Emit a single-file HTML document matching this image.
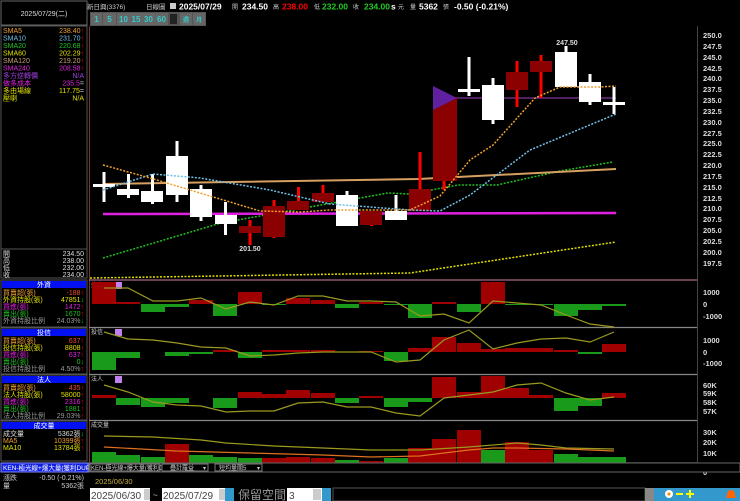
<!DOCTYPE html>
<html><head><meta charset="utf-8"><style>
html,body{margin:0;padding:0;background:#000;width:740px;height:501px;overflow:hidden}
svg{display:block}
text{font-family:"Liberation Sans","Noto Sans CJK TC",sans-serif}
</style></head><body>
<svg width="740" height="501" viewBox="0 0 740 501" xmlns="http://www.w3.org/2000/svg">
<rect width="740" height="501" fill="#000"/>
<!-- left panel -->
<g font-size="7">
<rect x="1" y="1" width="86" height="24" fill="none" stroke="#666"/>
<text x="44" y="16" fill="#ddd" text-anchor="middle">2025/07/29(二)</text>
<rect x="1" y="26" width="86" height="223" fill="none" stroke="#555"/>
<text x="3" y="33" fill="#f0a030">SMA5</text><text x="84" y="33" fill="#f0a030" text-anchor="end">238.40<tspan fill="#f00">↑</tspan></text>
<text x="3" y="40.5" fill="#70c0e8">SMA10</text><text x="84" y="40.5" fill="#70c0e8" text-anchor="end">231.70<tspan fill="#f00">↑</tspan></text>
<text x="3" y="48" fill="#20c020">SMA20</text><text x="84" y="48" fill="#20c020" text-anchor="end">220.68<tspan fill="#f00">↑</tspan></text>
<text x="3" y="55.5" fill="#e0e000">SMA60</text><text x="84" y="55.5" fill="#e0e000" text-anchor="end">202.29<tspan fill="#f00">↑</tspan></text>
<text x="3" y="63" fill="#c8a070">SMA120</text><text x="84" y="63" fill="#c8a070" text-anchor="end">219.20<tspan fill="#f00">↑</tspan></text>
<text x="3" y="70.5" fill="#e020e0">SMA240</text><text x="84" y="70.5" fill="#e020e0" text-anchor="end">208.58<tspan fill="#f00">↑</tspan></text>
<text x="3" y="78" fill="#a040e0">多方逆轉價</text><text x="84" y="78" fill="#a040e0" text-anchor="end">N/A</text>
<text x="3" y="85.5" fill="#e020e0">做多成本</text><text x="84" y="85.5" fill="#e020e0" text-anchor="end">235.5<tspan fill="#ccc">=</tspan></text>
<text x="3" y="93" fill="#e0e000">多由場線</text><text x="84" y="93" fill="#e0e000" text-anchor="end">117.75<tspan fill="#ccc">=</tspan></text>
<text x="3" y="100.5" fill="#e0e000">壓喇</text><text x="84" y="100.5" fill="#e0e000" text-anchor="end">N/A</text>
<rect x="1" y="249" width="86" height="29" fill="none" stroke="#555"/>
<g fill="#ddd"><text x="3" y="256">開</text><text x="84" y="256" text-anchor="end">234.50</text>
<text x="3" y="263">高</text><text x="84" y="263" text-anchor="end">238.00</text>
<text x="3" y="270">低</text><text x="84" y="270" text-anchor="end">232.00</text>
<text x="3" y="277">收</text><text x="84" y="277" text-anchor="end">234.00</text></g>
<!-- foreign -->
<rect x="1" y="280" width="86" height="47" fill="none" stroke="#555"/>
<rect x="2" y="281" width="84" height="7" fill="#0010f0"/><text x="44" y="287" fill="#fff" text-anchor="middle">外資</text>
<text x="3" y="295" fill="#f0a030">買賣超(張)</text><text x="84" y="295" fill="#f05030" text-anchor="end">-188<tspan fill="#f00">↑</tspan></text>
<text x="3" y="302" fill="#e0e000">外資持股(張)</text><text x="84" y="302" fill="#e0e000" text-anchor="end">47851<tspan fill="#0c0">↓</tspan></text>
<text x="3" y="309" fill="#e020e0">買進(張)</text><text x="84" y="309" fill="#e020e0" text-anchor="end">1472<tspan fill="#f00">↑</tspan></text>
<text x="3" y="316" fill="#20c020">賣出(張)</text><text x="84" y="316" fill="#20c020" text-anchor="end">1670<tspan fill="#f00">↑</tspan></text>
<text x="3" y="323" fill="#999">外資持股比例</text><text x="84" y="323" fill="#999" text-anchor="end">24.03%<tspan fill="#0c0">↓</tspan></text>
<!-- trust -->
<rect x="1" y="328" width="86" height="46" fill="none" stroke="#555"/>
<rect x="2" y="329" width="84" height="7" fill="#0010f0"/><text x="44" y="335" fill="#fff" text-anchor="middle">投信</text>
<text x="3" y="343" fill="#f0a030">買賣超(張)</text><text x="84" y="343" fill="#f05030" text-anchor="end">637<tspan fill="#f00">↑</tspan></text>
<text x="3" y="350" fill="#e0e000">投信持股(張)</text><text x="84" y="350" fill="#e0e000" text-anchor="end">8808<tspan fill="#f00">↑</tspan></text>
<text x="3" y="357" fill="#e020e0">買進(張)</text><text x="84" y="357" fill="#e020e0" text-anchor="end">637<tspan fill="#f00">↑</tspan></text>
<text x="3" y="364" fill="#20c020">賣出(張)</text><text x="84" y="364" fill="#20c020" text-anchor="end">0<tspan fill="#0c0">↓</tspan></text>
<text x="3" y="371" fill="#999">投信持股比例</text><text x="84" y="371" fill="#999" text-anchor="end">4.50%<tspan fill="#f00">↑</tspan></text>
<!-- legal -->
<rect x="1" y="375" width="86" height="45" fill="none" stroke="#555"/>
<rect x="2" y="376" width="84" height="7" fill="#0010f0"/><text x="44" y="382" fill="#fff" text-anchor="middle">法人</text>
<text x="3" y="390" fill="#f0a030">買賣超(張)</text><text x="84" y="390" fill="#f05030" text-anchor="end">435<tspan fill="#f00">↑</tspan></text>
<text x="3" y="397" fill="#e0e000">法人持股(張)</text><text x="84" y="397" fill="#e0e000" text-anchor="end">58000<tspan fill="#f00">↑</tspan></text>
<text x="3" y="404" fill="#e020e0">買進(張)</text><text x="84" y="404" fill="#e020e0" text-anchor="end">2316<tspan fill="#f00">↑</tspan></text>
<text x="3" y="411" fill="#20c020">賣出(張)</text><text x="84" y="411" fill="#20c020" text-anchor="end">1881<tspan fill="#f00">↑</tspan></text>
<text x="3" y="418" fill="#999">法人持股比例</text><text x="84" y="418" fill="#999" text-anchor="end">29.03%<tspan fill="#f00">↑</tspan></text>
<!-- volume -->
<rect x="1" y="421" width="86" height="40" fill="none" stroke="#555"/>
<rect x="2" y="422" width="84" height="7" fill="#0010f0"/><text x="44" y="428" fill="#fff" text-anchor="middle">成交量</text>
<text x="3" y="436" fill="#ddd">成交量</text><text x="84" y="436" fill="#ddd" text-anchor="end">5362張<tspan fill="#0c0">↓</tspan></text>
<text x="3" y="443" fill="#f0a030">MA5</text><text x="84" y="443" fill="#f0a030" text-anchor="end">10399張<tspan fill="#f00">↑</tspan></text>
<text x="3" y="450" fill="#e0e000">MA10</text><text x="84" y="450" fill="#e0e000" text-anchor="end">13784張<tspan fill="#f00">↑</tspan></text>
<rect x="1" y="463" width="87" height="9" fill="#1020e0" stroke="#88f"/>
<text x="3" y="470" fill="#fff" font-size="6.5">KEN-極光線+爆大量(獲利DUP)</text>
<text x="3" y="480" fill="#ccc">漲跌</text><text x="84" y="480" fill="#ccc" text-anchor="end">-0.50 (-0.21%)</text>
<text x="3" y="488" fill="#ccc">量</text><text x="84" y="488" fill="#ccc" text-anchor="end">5362張</text>
</g>
<!-- header -->
<g font-size="7.5">
<text x="87" y="9" fill="#ccc" font-size="6.5">新日興(3376)</text>
<text x="146" y="9" fill="#ccc" font-size="6.5">日線圖</text>
<rect x="170" y="3" width="6" height="6" fill="#ccc"/>
<g font-weight="bold" font-size="8.5">
<text x="179" y="9.5" fill="#fff">2025/07/29</text>
<text x="232" y="9" fill="#ccc" font-size="6" font-weight="normal">開</text><text x="242" y="9.5" fill="#fff">234.50</text>
<text x="273" y="9" fill="#ccc" font-size="6" font-weight="normal">高</text><text x="282" y="9.5" fill="#f00">238.00</text>
<text x="314" y="9" fill="#ccc" font-size="6" font-weight="normal">低</text><text x="322" y="9.5" fill="#2c2">232.00</text>
<text x="353" y="9" fill="#ccc" font-size="6" font-weight="normal">收</text><text x="364" y="9.5" fill="#2c2">234.00</text>
<text x="391" y="9.5" fill="#fff">s</text><text x="398" y="9" fill="#ccc" font-size="6" font-weight="normal">元</text>
<text x="410" y="9" fill="#ccc" font-size="6" font-weight="normal">量</text><text x="419" y="9.5" fill="#fff">5362</text>
<text x="443" y="9" fill="#ccc" font-size="6" font-weight="normal">張</text>
<text x="454" y="9.5" fill="#fff">-0.50 (-0.21%)</text>
</g></g>
<!-- toolbar -->
<rect x="90" y="12" width="116" height="14" fill="#555"/>
<g fill="#3cc" font-size="8" text-anchor="middle" font-weight="bold">
<rect x="91" y="13" width="11" height="12" fill="#666"/><text x="96.5" y="22">1</text>
<rect x="103" y="13" width="13" height="12" fill="#666"/><text x="109.5" y="22">5</text>
<rect x="117" y="13" width="13" height="12" fill="#666"/><text x="123.5" y="22">10</text>
<rect x="130" y="13" width="12" height="12" fill="#666"/><text x="136" y="22">15</text>
<rect x="142" y="13" width="13" height="12" fill="#666"/><text x="148.5" y="22">30</text>
<rect x="155" y="13" width="13" height="12" fill="#666"/><text x="161.5" y="22">60</text>
<rect x="170" y="14" width="7" height="10" fill="#222"/>
<rect x="180" y="13" width="12" height="12" fill="#666"/><text x="186" y="22" font-size="6">週</text>
<rect x="193" y="13" width="12" height="12" fill="#666"/><text x="199" y="22" font-size="6">月</text>
</g>
<!-- chart frame -->
<line x1="89.5" y1="26" x2="89.5" y2="472" stroke="#733" />
<line x1="697.5" y1="26" x2="697.5" y2="472" stroke="#444"/>
<g stroke="#888" stroke-width="1.2">
<line x1="89" y1="280" x2="697" y2="280" stroke="#a68"/>
<line x1="89" y1="327.5" x2="697" y2="327.5"/>
<line x1="89" y1="374.5" x2="697" y2="374.5"/>
<line x1="89" y1="420.5" x2="697" y2="420.5"/>
<line x1="89" y1="463" x2="697" y2="463"/>
</g>
<!-- right axis -->
<g fill="#ddd" font-size="7.5" font-weight="bold">
<text x="703" y="38">250.0</text><text x="703" y="49">247.5</text><text x="703" y="60">245.0</text><text x="703" y="71">242.5</text><text x="703" y="81">240.0</text><text x="703" y="92">237.5</text><text x="703" y="103">235.0</text><text x="703" y="114">232.5</text><text x="703" y="125">230.0</text><text x="703" y="136">227.5</text><text x="703" y="146">225.0</text><text x="703" y="157">222.5</text><text x="703" y="168">220.0</text><text x="703" y="179">217.5</text><text x="703" y="190">215.0</text><text x="703" y="201">212.5</text><text x="703" y="211">210.0</text><text x="703" y="222">207.5</text><text x="703" y="233">205.0</text><text x="703" y="244">202.5</text><text x="703" y="255">200.0</text><text x="703" y="266">197.5</text>
<text x="703" y="295">1000</text><text x="703" y="307">0</text><text x="703" y="319">-1000</text>
<text x="703" y="343">1000</text><text x="703" y="355">0</text><text x="703" y="366">-1000</text>
<text x="703" y="388">60K</text><text x="703" y="396">59K</text><text x="703" y="405">58K</text><text x="703" y="414">57K</text>
<text x="703" y="435">30K</text><text x="703" y="445">20K</text><text x="703" y="456">10K</text>
<text x="703" y="475">0</text>
</g>
<!-- MA lines -->
<polyline points="90,278 410,273 616,242" fill="none" stroke="#e0e000" stroke-width="1.5" stroke-dasharray="2 1.5"/>
<polyline points="103,258 221,223 388,193 410,194 458,185 497,185 560,171 613,162" fill="none" stroke="#20c020" stroke-width="1.5" stroke-dasharray="2 1.5"/>
<polyline points="103,184 418,179 616,169" fill="none" stroke="#d8a060" stroke-width="2"/>
<polyline points="103,214 616,213" fill="none" stroke="#e020e0" stroke-width="2.5"/>
<line x1="457" y1="98" x2="616" y2="98" stroke="#a040c0" stroke-width="1"/>
<!-- candles -->
<g>
<g fill="#fff">
<rect x="102.5" y="172" width="3" height="30"/><rect x="93" y="184" width="22" height="3"/>
<rect x="127" y="174" width="3" height="24"/><rect x="117" y="189" width="22" height="6"/>
<rect x="151" y="174" width="3" height="30"/><rect x="141" y="191" width="22" height="11"/>
<rect x="175.5" y="141" width="3" height="61"/><rect x="166" y="156" width="22" height="39"/>
<rect x="199.5" y="185" width="3" height="36"/><rect x="190" y="189" width="22" height="28"/>
<rect x="224" y="202" width="3" height="33"/><rect x="215" y="215" width="22" height="9"/>
<rect x="345.5" y="191" width="3" height="35"/><rect x="336" y="195" width="22" height="31"/>
<rect x="394.5" y="195" width="3" height="25"/><rect x="385" y="211" width="22" height="9"/>
<rect x="467.5" y="57" width="3" height="39"/><rect x="458" y="89" width="22" height="3"/>
<rect x="491.5" y="78" width="3" height="46"/><rect x="482" y="85" width="22" height="35"/>
<rect x="564.5" y="46" width="3" height="41"/><rect x="555" y="52" width="22" height="35"/>
<rect x="588.5" y="74" width="3" height="31"/><rect x="579" y="82" width="22" height="20"/>
<rect x="612.5" y="87" width="3" height="27"/><rect x="603" y="102" width="22" height="3"/>
</g>
<g fill="#f00">
<rect x="248.5" y="220" width="3" height="25"/><rect x="272.5" y="200" width="3" height="38"/><rect x="297" y="187" width="3" height="23"/><rect x="321.5" y="185" width="3" height="17"/><rect x="370" y="211" width="3" height="15"/><rect x="418.5" y="152" width="3" height="59"/><rect x="442.5" y="97" width="3" height="93"/><rect x="515.5" y="61" width="3" height="46"/><rect x="539.5" y="55" width="3" height="43"/>
</g>
<g fill="#8b0000">
<rect x="239" y="226" width="22" height="7"/><rect x="263" y="206" width="22" height="31"/><rect x="287" y="201" width="22" height="9"/><rect x="312" y="193" width="22" height="9"/><rect x="360" y="211" width="22" height="14"/><rect x="409" y="189" width="22" height="22"/><rect x="433" y="97" width="24" height="84"/><rect x="506" y="72" width="22" height="18"/><rect x="530" y="61" width="22" height="11"/>
</g>
<polygon points="433,86 457,98 433,110" fill="#6020a0"/>
<text x="250" y="251" fill="#ddd" font-size="7" font-weight="bold" text-anchor="middle">201.50</text>
<text x="567" y="45" fill="#ddd" font-size="7" font-weight="bold" text-anchor="middle">247.50</text>
</g>
<polyline points="103,190 153,174 200,178 270,190 330,204 410,210 440,211 470,195 530,150 616,114" fill="none" stroke="#70c0e8" stroke-width="1.5" stroke-dasharray="2 1.5"/>
<polyline points="103,165 150,178 200,193 260,211 300,212 330,210 410,210 440,196 470,160 493,145 535,98 560,87 600,87 616,86" fill="none" stroke="#f0a030" stroke-width="1.5" stroke-dasharray="2 1.5"/>
<!-- subpanel labels -->
<g font-size="6" fill="#ccc"><text x="91" y="287">外資</text><text x="91" y="334">投信</text><text x="91" y="381">法人</text><text x="91" y="427">成交量</text></g>
<g fill="#c080f0"><rect x="115" y="282" width="7" height="7"/><rect x="115" y="329" width="7" height="7"/><rect x="115" y="376" width="7" height="7"/></g>
<!-- foreign bars -->
<g fill="#a00000">
<rect x="92" y="282" width="24" height="22"/><rect x="116" y="302" width="24" height="2"/><rect x="189" y="300" width="24" height="4"/><rect x="238" y="292" width="24" height="12"/><rect x="286" y="298" width="24" height="6"/><rect x="311" y="300" width="24" height="4"/><rect x="359" y="302" width="24" height="2"/><rect x="432" y="302" width="24" height="2"/><rect x="481" y="282" width="24" height="22"/>
</g>
<g fill="#1a9a1a">
<rect x="141" y="304" width="24" height="8"/><rect x="165" y="304" width="24" height="3"/><rect x="213" y="304" width="24" height="12"/><rect x="262" y="304" width="24" height="1"/><rect x="335" y="304" width="24" height="4"/><rect x="384" y="304" width="24" height="1"/><rect x="408" y="304" width="24" height="14"/><rect x="457" y="304" width="24" height="8"/><rect x="505" y="304" width="24" height="1"/><rect x="529" y="304" width="24" height="1"/><rect x="554" y="304" width="24" height="12"/><rect x="578" y="304" width="24" height="6"/><rect x="602" y="304" width="24" height="2"/>
</g>
<polyline points="104,288 128,288 153,301 177,301 201,298 226,309 250,302 274,305 298,296 323,296 347,301 371,301 396,302 420,316 444,314 469,323 493,301 517,303 541,305 566,315 590,324 614,327" fill="none" stroke="#9a9a20" stroke-width="1.2"/>
<!-- trust bars -->
<g fill="#a00000">
<rect x="213" y="350" width="24" height="2"/><rect x="262" y="350" width="24" height="2"/><rect x="286" y="350" width="24" height="2"/><rect x="311" y="350" width="24" height="2"/><rect x="359" y="351" width="24" height="1"/><rect x="408" y="348" width="24" height="4"/><rect x="432" y="337" width="24" height="15"/><rect x="457" y="343" width="24" height="9"/><rect x="481" y="349" width="24" height="3"/><rect x="505" y="348" width="24" height="4"/><rect x="529" y="348" width="24" height="4"/><rect x="554" y="350" width="24" height="2"/><rect x="602" y="344" width="24" height="8"/>
</g>
<g fill="#1a9a1a">
<rect x="92" y="352" width="24" height="18"/><rect x="116" y="352" width="24" height="6"/><rect x="165" y="352" width="24" height="4"/><rect x="189" y="352" width="24" height="2"/><rect x="238" y="352" width="24" height="6"/><rect x="384" y="352" width="24" height="9"/><rect x="578" y="352" width="24" height="2"/>
</g>
<polyline points="104,332 128,339 153,340 177,343 201,347 226,348 250,356 274,355 298,353 323,352 347,352 371,352 396,362 420,360 444,340 469,330 493,349 517,343 541,339 566,338 590,342 614,332" fill="none" stroke="#9a9a20" stroke-width="1.2"/>
<!-- dealer bars -->
<g fill="#a00000">
<rect x="92" y="395" width="24" height="3"/><rect x="238" y="392" width="24" height="6"/><rect x="262" y="394" width="24" height="4"/><rect x="286" y="390" width="24" height="8"/><rect x="311" y="393" width="24" height="5"/><rect x="359" y="396" width="24" height="2"/><rect x="432" y="377" width="24" height="21"/><rect x="457" y="392" width="24" height="6"/><rect x="481" y="376" width="24" height="22"/><rect x="505" y="388" width="24" height="10"/><rect x="529" y="395" width="24" height="3"/><rect x="602" y="393" width="24" height="5"/>
</g>
<g fill="#1a9a1a">
<rect x="116" y="398" width="24" height="7"/><rect x="141" y="398" width="24" height="9"/><rect x="165" y="398" width="24" height="5"/><rect x="213" y="398" width="24" height="10"/><rect x="335" y="398" width="24" height="5"/><rect x="384" y="398" width="24" height="9"/><rect x="408" y="398" width="24" height="4"/><rect x="554" y="398" width="24" height="13"/><rect x="578" y="398" width="24" height="8"/>
</g>
<polyline points="104,385 128,392 153,402 177,405 201,406 226,412 250,411 274,411 298,403 323,402 347,407 371,407 396,413 420,416 444,398 469,395 493,392 517,385 541,383 566,393 590,400 614,397" fill="none" stroke="#9a9a20" stroke-width="1.2"/>
<!-- volume bars -->
<g fill="#a00000">
<rect x="165" y="444" width="24" height="19"/><rect x="262" y="458" width="24" height="5"/><rect x="286" y="457" width="24" height="6"/><rect x="311" y="458" width="24" height="5"/><rect x="359" y="461" width="24" height="2"/><rect x="408" y="448" width="24" height="15"/><rect x="432" y="439" width="24" height="24"/><rect x="457" y="430" width="24" height="33"/><rect x="505" y="442" width="24" height="21"/><rect x="529" y="450" width="24" height="13"/>
</g>
<g fill="#1a9a1a">
<rect x="92" y="452" width="24" height="11"/><rect x="116" y="455" width="24" height="8"/><rect x="141" y="457" width="24" height="6"/><rect x="189" y="455" width="24" height="8"/><rect x="213" y="457" width="24" height="6"/><rect x="238" y="458" width="24" height="5"/><rect x="335" y="460" width="24" height="3"/><rect x="384" y="458" width="24" height="5"/><rect x="481" y="450" width="24" height="13"/><rect x="554" y="454" width="24" height="9"/><rect x="578" y="457" width="24" height="6"/><rect x="602" y="457" width="24" height="6"/>
</g>
<polyline points="104,436 153,437 201,440 226,443 274,446 323,448 371,450 420,450 469,447 517,443 541,445 566,448 614,449" fill="none" stroke="#9a9a20" stroke-width="1.2"/>
<polyline points="104,447 177,451 250,453 323,455 371,457 420,456 444,453 469,450 493,448 517,448 566,449 614,451" fill="none" stroke="#e07020" stroke-width="1.2"/>
<!-- bottom rows -->
<rect x="89" y="463" width="651" height="9" fill="#000" stroke="#666"/>
<g font-size="6" fill="#ccc">
<rect x="90" y="464" width="70" height="7" fill="#000" stroke="#777"/><text x="91" y="470">KEN-極光線+爆大量(獲利DUP)</text>
<rect x="162" y="464" width="46" height="7" fill="#000" stroke="#777"/><text x="170" y="470">疊計羅益</text><text x="203" y="470">▾</text>
<rect x="215" y="464" width="47" height="7" fill="#000" stroke="#777"/><text x="219" y="470">短均量關5</text><text x="257" y="470">▾</text>
</g>
<text x="95" y="484" fill="#c8b040" font-size="7.5">2025/06/30</text>
<g font-size="10">
<rect x="90" y="488" width="60" height="13" fill="#fff"/><text x="91" y="499" fill="#444">2025/06/30</text>
<rect x="144" y="489" width="6" height="11" fill="#ccc"/>
<text x="153" y="498" fill="#ccc" font-size="8">~</text>
<rect x="162" y="488" width="63" height="13" fill="#fff"/><text x="163" y="499" fill="#444">2025/07/29</text>
<rect x="219" y="489" width="6" height="11" fill="#ccc"/>
<rect x="225" y="488" width="9" height="13" fill="#39c"/>
<text x="238" y="499" fill="#999" font-size="12">保留空間</text>
<rect x="287" y="488" width="35" height="13" fill="#fff"/><text x="289" y="499" fill="#444">3</text>
<rect x="313" y="489" width="8" height="11" fill="#ccc"/>
<rect x="322" y="488" width="9" height="13" fill="#39c"/>
<rect x="333" y="488" width="312" height="13" fill="#000" stroke="#555"/>
<rect x="645" y="488" width="9" height="13" fill="#888"/>
<rect x="654" y="488" width="86" height="13" fill="#39c"/>
<circle cx="669" cy="494" r="4" fill="#fff"/><circle cx="669" cy="494" r="1.5" fill="#f80"/>
<rect x="676" y="493" width="7" height="2" fill="#ff0"/>
<rect x="686" y="493" width="8" height="2" fill="#ff0"/><rect x="689" y="490" width="2" height="8" fill="#ff0"/>
<path d="M731,490 q4,0 4,5 l1,3 h-10 l1,-3 q0,-5 4,-5z" fill="#f60"/>
</g>
</svg>
</body></html>
